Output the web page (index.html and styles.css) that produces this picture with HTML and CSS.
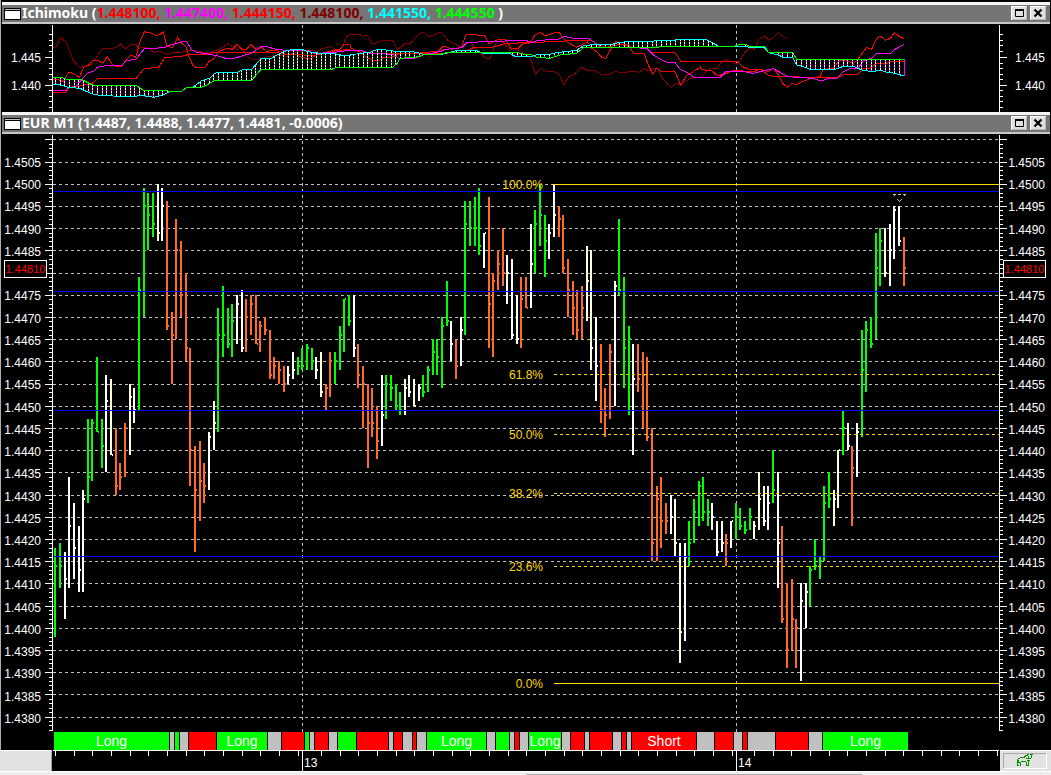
FILE: index.html
```html
<!DOCTYPE html>
<html lang="en">
<head>
<meta charset="utf-8">
<title>EUR M1</title>
<link rel="stylesheet" href="styles.css">
</head>
<body>
<main class="workspace">
  <section class="pane">
    <header class="titlebar">
      <span class="window-icon"></span>
      <h2 class="title">Ichimoku (<span class="red">1.448100,</span> <span class="magenta">1.447400,</span> <span class="red">1.444150,</span> <span class="maroon">1.448100,</span> <span class="cyan">1.441550,</span> <span class="lime">1.444550</span> )</h2>
      <button class="win-btn" type="button" aria-label="Maximize Ichimoku"><svg viewBox="0 0 16 14"><path d="M4.500 3.500h8v7h-8z" fill="none" stroke="#000"/><path d="M4 4h9" stroke="#000" stroke-width="2"/></svg></button>
      <button class="win-btn" type="button" aria-label="Close Ichimoku"><svg viewBox="0 0 16 14"><path d="M4.500 3.500l7 7M11.500 3.500l-7 7" stroke="#000" stroke-width="2.200"/></svg></button>
    </header>
    <div class="row indicator">
      <div class="axis">
        <svg class="fill" id="ind-left" viewBox="0 24 53 88" preserveAspectRatio="none"></svg>
        <ol class="labels ind-labels"><li>1.445</li><li>1.440</li></ol>
      </div>
      <div class="plot"><svg class="fill" id="ind-plot" viewBox="159 72 2838 264" preserveAspectRatio="none"></svg></div>
      <div class="axis">
        <svg class="fill" id="ind-right" viewBox="999 24 52 88" preserveAspectRatio="none"></svg>
        <ol class="labels ind-labels"><li>1.445</li><li>1.440</li></ol>
      </div>
    </div>
  </section>

  <section class="pane main-pane">
    <header class="titlebar">
      <span class="window-icon"></span>
      <h1 class="title">EUR M1 (1.4487, 1.4488, 1.4477, 1.4481, -0.0006)</h1>
      <button class="win-btn" type="button" aria-label="Maximize EUR M1"><svg viewBox="0 0 16 14"><path d="M4.500 3.500h8v7h-8z" fill="none" stroke="#000"/><path d="M4 4h9" stroke="#000" stroke-width="2"/></svg></button>
      <button class="win-btn" type="button" aria-label="Close EUR M1"><svg viewBox="0 0 16 14"><path d="M4.500 3.500l7 7M11.500 3.500l-7 7" stroke="#000" stroke-width="2.200"/></svg></button>
    </header>
    <div class="row prices">
      <div class="axis">
        <svg class="fill" id="price-left" viewBox="0 134 53 598" preserveAspectRatio="none"></svg>
        <ol class="labels price-labels"></ol>
        <output class="quote">1.44810</output>
      </div>
      <div class="plot">
        <svg class="fill" id="price-plot" viewBox="53 134 946 598" preserveAspectRatio="none"></svg>
        <div id="fib-labels"></div>
      </div>
      <div class="axis">
        <svg class="fill" id="price-right" viewBox="999 134 52 598" preserveAspectRatio="none"></svg>
        <ol class="labels price-labels"></ol>
        <output class="quote">1.44810</output>
      </div>
    </div>
    <div class="row signals"><div></div><div class="ribbon" id="ribbon"></div><div></div></div>
  </section>

  <footer class="row timeline">
    <div class="corner"></div>
    <div class="plot">
      <svg class="fill" id="time-plot" viewBox="53 750 946 21" preserveAspectRatio="none"></svg>
      <div id="time-labels"></div>
    </div>
    <div class="corner">
      <button class="bull" type="button" aria-label="Bull"><svg viewBox="0 0 18 14" shape-rendering="crispEdges"><path d="M2 4.500h2M4 3.500h5M1.500 5v7M2.500 6v2M2 8.500h2M4.500 8v4M5 7.500h5M10.500 8v4M12.500 7v5M8 2.500h2M9 1.500h3M11 .5h2M14 .5h3M15.500 1v3M10 4.500h2M13 4.500h2M12.500 2v3M11 6.500h3M2 11.500h1M11 11.500h2" fill="none" stroke="#009000"/></svg></button>
    </div>
  </footer>
  <div class="status"><span></span></div>
</main>
<script src="script.js"></script>
</body>
</html>
```

FILE: styles.css
```css
* { box-sizing: border-box; }

body {
  margin: 0;
  background: #000;
  color: #fff;
  font-family: "Liberation Sans", Arial, sans-serif;
  font-size: 12px;
  line-height: 16px;
}

.workspace {
  display: flex;
  flex-direction: column;
  min-height: 100vh;
  padding-top: 2px;
  background: linear-gradient(#b0b0b0, #b0b0b0) left top / 1px 100% no-repeat;
}

.main-pane {
  flex: 1;
  display: flex;
  flex-direction: column;
}

.titlebar {
  display: flex;
  align-items: center;
  gap: 3px;
  height: 22px;
  margin: 0 1px 0 2px;
  padding: 0 4px 2px 2px;
  background: #757575;
  border-top: 3px solid #f4f4f4;
  border-bottom: 2px solid #c8c8c8;
}

.window-icon {
  width: 17px;
  height: 12px;
  margin-top: 3px;
  background: #fff;
  border: 1px solid #000;
  box-shadow: inset 0 1px #c0c0c0, inset 0 2px #000;
}

.title {
  flex: 1;
  margin: 0 0 0 -2px;
  font: bold 14px/16px "Noto Sans", sans-serif;
  white-space: pre;
}

.red { color: #f00; }
.magenta { color: #f0f; }
.maroon { color: #800000; }
.cyan { color: #0ff; }
.lime { color: #0f0; }

.win-btn {
  width: 16px;
  height: 14px;
  padding: 0;
  border: 0;
  background: #e0e0e0;
  box-shadow: inset 1px 1px #fff, inset -1px -1px #b8b8b8;
}

.win-btn svg {
  display: block;
  width: 16px;
  height: 14px;
}

.row {
  display: grid;
  grid-template-columns: 53px minmax(0, 1fr) 52px;
}

.indicator { height: 88px; }

.prices {
  flex: 1;
  min-height: 450px;
}

.axis,
.plot {
  position: relative;
  display: flex;
}

.fill {
  position: absolute;
  inset: 0;
  width: 100%;
  height: 100%;
  shape-rendering: crispEdges;
}

.labels {
  position: relative;
  display: flex;
  flex-direction: column;
  justify-content: space-between;
  width: 46px;
  margin: 0;
  padding: 0;
  list-style: none;
  text-align: right;
}

.axis:first-child .labels { width: 41px; }
.ind-labels { padding-top: 26px; padding-bottom: 18px; }
.price-labels { padding-top: 21px; padding-bottom: 5px; }

.quote {
  position: absolute;
  top: 21%;
  left: 4px;
  width: 43px;
  height: 18px;
  border: 1px solid #fff;
  background: #000;
  color: #f00;
  font-size: 11px;
  line-height: 16px;
  text-align: center;
}

.fib {
  position: absolute;
  right: 48.2%;
  color: #ffd700;
  transform: translateY(-50%);
}

.signals { height: 18px; }

.ribbon {
  display: flex;
  gap: 1px;
  padding-left: 1px;
}

.seg {
  flex-basis: 0;
  min-width: 0;
  font-size: 14px;
  line-height: 18px;
  text-align: center;
}

.seg-g { background: #0f0; }
.seg-r { background: #f00; }
.seg-s { background: #c0c0c0; }

.timeline { height: 21px; }

.corner {
  padding: 2px 4px 1px 3px;
  background: #e2e2e2;
  border: solid #fff;
  border-width: 1px 0 0;
}

.corner:first-child { margin-right: 1px; border-right: 1px solid #a0a0a0; }
.corner:last-child { margin-left: 1px; }

.bull {
  display: block;
  width: 100%;
  height: 16px;
  padding: 0;
  border: 1px solid;
  border-color: #a8a8a8 #fff #fff #a8a8a8;
  background: #e2e2e2;
}

.bull svg {
  display: block;
  width: 18px;
  height: 14px;
  margin: 0 auto 0 12px;
}

.time {
  position: absolute;
  top: 5px;
  padding-left: 2px;
}

.status {
  height: 4px;
  padding: 3px 0 0;
  background: #eee;
  border-top: 1px solid #fff;
}

.status span {
  display: block;
  height: 1px;
  margin: -1px 18% 0 50%;
  background: #aaa;
}
```

FILE: script.js
```js
const $ = (id) => document.getElementById(id);

const line = (x1, y1, x2, y2, color, extra = "") =>
  `<path d="M${x1} ${y1}L${x2} ${y2}" fill="none" stroke="${color}" ${extra}/>`;
const rect = (x, y, w, h, color) =>
  `<rect x="${x}" y="${y}" width="${w}" height="${h}" fill="${color}"/>`;
const hdash = (x, y, end, color) => line(x, y + 0.5, end, y + 0.5, color, 'stroke-dasharray="3 3"');

/* Prices are stored as pips above 1.0000: 4481 means 1.4481 */
const priceY = (pips) => Math.floor(162 + (4505 - pips) * 4.44);

/* Axes */
function axis(x, side, majors, minors, top, bottom) {
  let out = rect(x, top, 1, bottom - top, "#fff");
  for (const y of minors) out += rect(side < 0 ? x - 3 : x + 1, y, 3, 1, "#fff");
  for (const y of majors) out += rect(side < 0 ? x - 7 : x + 1, y, 7, 1, "#fff");
  return out;
}
const indMajors = [57, 85];
const indMinors = [34, 40, 45, 51, 63, 68, 74, 79, 90, 96, 101, 107];
$("ind-left").innerHTML = axis(52, -1, indMajors, indMinors, 25, 112);
$("ind-right").innerHTML = axis(999, 1, indMajors, indMinors, 25, 112);

const majors = [], minors = [];
for (let p = 4510; p >= 4377; p--) (p % 5 ? minors : majors).push(priceY(p));
$("price-left").innerHTML = axis(52, -1, majors, minors, 135, 731);
$("price-right").innerHTML = axis(999, 1, majors, minors, 135, 731);

let labels = "";
for (let p = 4505; p >= 4380; p -= 5) labels += `<li>${(1 + p / 10000).toFixed(4)}</li>`;
document.querySelectorAll(".price-labels").forEach((el) => { el.innerHTML = labels; });

/* Price bars: colour, high, low, close */
const bars = `g4418,4398,4414 g4419,4409,4414 w4417,4402,4411 w4434,4409,4423 w4428,4411,4418 w4423,4408,4413
w4431,4408,4429 g4447,4428,4434 g4447,4433,4446 g4461,4444,4444 g4447,4436,4441 w4457,4435,4451 c4456,4439,4439
o4445,4430,4432 o4437,4431,4434 o4446,4434,4445 c4455,4439,4452 w4454,4446,4449 g4479,4449,4476 g4499,4470,4495
g4498,4485,4493 g4498,4488,4491 c4500,4487,4489 w4499,4487,4495 o4496,4467,4468 o4471,4455,4466 o4492,4465,4485
o4487,4470,4475 o4480,4460,4463 o4463,4432,4440 o4441,4417,4431 o4442,4424,4433 o4437,4428,4432 w4444,4431,4443
c4451,4440,4446 g4472,4444,4466 g4477,4461,4466 g4472,4463,4464 g4473,4461,4469 w4475,4464,4473 w4476,4462,4463
o4474,4462,4470 o4475,4466,4473 o4475,4464,4464 o4469,4462,4468 o4470,4466,4467 o4467,4456,4457 o4461,4456,4459
o4460,4455,4458 o4459,4453,4455 w4459,4455,4457 w4462,4456,4458 g4461,4457,4459 g4463,4458,4459 g4464,4458,4463
g4463,4458,4460 w4461,4456,4458 c4462,4452,4453 o4455,4449,4454 o4462,4452,4460 g4462,4455,4460 g4468,4458,4466
g4474,4462,4474 g4475,4468,4469 w4475,4461,4463 o4464,4454,4457 o4459,4445,4455 o4455,4436,4446 o4454,4443,4446
o4450,4438,4442 w4457,4441,4448 g4457,4447,4455 g4457,4451,4454 g4455,4449,4450 g4453,4448,4449 c4456,4448,4454
w4457,4452,4453 c4456,4450,4450 w4455,4451,4454 g4457,4452,4453 g4459,4453,4458 g4465,4457,4462 g4465,4457,4461
g4470,4454,4468 g4478,4468,4469 w4469,4460,4464 o4465,4456,4459 w4470,4459,4467 g4496,4466,4491 g4496,4486,4490
g4497,4486,4490 g4499,4484,4486 w4489,4481,4489 o4497,4463,4473 o4480,4461,4478 o4485,4476,4482 o4490,4477,4480
w4484,4473,4480 w4483,4465,4466 w4475,4464,4465 o4479,4463,4474 o4479,4472,4472 w4491,4472,4482 g4494,4480,4491
g4500,4486,4493 g4493,4479,4487 w4491,4483,4489 c4500,4488,4493 o4495,4488,4492 o4493,4480,4481 o4483,4470,4476
o4478,4466,4472 o4476,4465,4467 o4477,4465,4472 c4486,4469,4478 c4485,4458,4463 w4470,4451,4459 o4464,4446,4449
o4454,4443,4448 o4464,4447,4462 w4478,4450,4477 g4492,4475,4476 g4479,4454,4463 g4468,4448,4465 w4464,4439,4456
o4464,4453,4456 o4462,4445,4457 o4461,4442,4443 o4445,4415,4419 o4432,4415,4429 o4434,4418,4424 o4428,4421,4424
w4430,4421,4425 c4429,4416,4419 c4419,4392,4399 w4419,4397,4416 g4424,4414,4419 g4429,4419,4426 g4433,4423,4432
g4434,4424,4426 g4429,4423,4426 w4428,4422,4425 w4424,4416,4417 w4424,4417,4419 o4421,4414,4419 w4424,4418,4424
g4428,4420,4425 g4427,4422,4423 g4424,4421,4422 g4427,4422,4425 c4424,4420,4423 c4435,4422,4429 w4432,4423,4424
w4432,4422,4428 g4440,4428,4431 w4435,4409,4419 o4423,4401,4402 o4410,4391,4395 o4411,4395,4402 o4402,4391,4400
w4410,4388,4406 w4410,4400,4408 g4414,4405,4413 g4420,4413,4414 g4416,4411,4415 g4432,4415,4428 g4435,4427,4429
c4431,4423,4429 c4440,4427,4440 g4449,4439,4445 w4446,4440,4441 o4441,4423,4436 w4446,4434,4444 g4467,4443,4458
g4469,4453,4467 g4470,4463,4464 g4489,4465,4481 g4490,4477,4487 c4490,4479,4480 w4491,4477,4485 w4495,4483,4494
w4495,4486,4487 o4488,4477,4481`.split(/\s+/);
const barColors = { g: "#00ff00", w: "#ffffff", c: "#ffffe0", o: "#ff6a26" };

let plot = "";
for (const y of majors) plot += hdash(53, y, 999, "#c0c0c0");
for (const x of [302, 736]) plot += line(x + 0.5, 135, x + 0.5, 732, "#c0c0c0", 'stroke-dasharray="3 3"');
bars.forEach((bar, i) => {
  const color = barColors[bar[0]];
  const [high, low, close] = bar.slice(1).split(",").map(Number).map(priceY);
  const x = Math.floor(54.7 + 4.6617 * i);
  plot += rect(x, high, 2, low - high, color) + rect(x + 2, close - 1, 1, 2, color);
});
for (const y of [191, 291, 410, 556]) plot += rect(53, y, 946, 1, "#0000ff");

/* Fibonacci levels */
const fibs = [["100.0%", 184], ["61.8%", 374], ["50.0%", 434], ["38.2%", 493], ["23.6%", 566], ["0.0%", 683]];
for (const [name, y] of fibs) {
  const solid = name === "100.0%" || name === "0.0%";
  plot += solid ? rect(554, y, 445, 1, "#ffd700") : hdash(554, y, 999, "#ffd700");
  $("fib-labels").innerHTML += `<span class="fib" style="top:${((y + 1 - 134) / 598) * 100}%">${name}</span>`;
}
plot += rect(893, 194, 3, 1, "#c0c0c0") + rect(898, 194, 3, 1, "#c0c0c0") + rect(903, 194, 3, 1, "#c0c0c0")
  + rect(894, 195, 1, 1, "#c0c0c0") + rect(904, 195, 1, 1, "#c0c0c0")
  + [[897, 199], [898, 200], [899, 201], [900, 200], [901, 199]].map(([x, y]) => rect(x, y, 1, 1, "#c0c0c0")).join("");
$("price-plot").innerHTML = plot;

/* Ichimoku curves, drawn on a grid of three units to the pixel */
const parse = (text) => text.trim().split(/\s+/).map((pair) => pair.split(",").map(Number));
const join = (a, b, c) => [
  ...parse(a),
  ...parse(b).map(([x, y]) => [x + 1050, y]),
  ...parse(c).map(([x, y]) => [x + 2100, y]),
];
const chikou = join(
  "160,143 167,143 181,112 199,127 208,152 221,183 238,202 250,200 262,198 272,196 285,178 296,162 308,147 334,146 350,142 362,132 376,147 393,134 408,133 415,148 424,142 440,141 452,148 462,158 475,153 487,157 505,163 520,158 545,158 560,152 580,150 600,155 625,160 650,150 668,142 685,130 697,140 712,150 725,142 740,168 755,177 770,180 785,178 800,170 815,168 830,167 845,165 860,170 875,162 890,158 905,152 920,155 935,150 950,155 970,145 990,140 1010,150 1025,145 1040,110 1050,102",
  "28,103 38,109 53,106 67,133 80,128 97,121 127,121 142,148 155,140 165,130 180,132 193,115 210,100 223,97 236,110 250,106 268,97 278,100 292,120 310,130 335,140 350,130 362,126 375,148 390,158 405,173 418,177 430,150 440,125 455,122 465,135 480,145 500,150 520,160 540,173 547,190 556,223 572,205 588,215 615,216 628,223 642,255 656,230 670,225 695,203 712,211 735,212 757,226 780,222 795,214 815,218 850,214 866,217 882,206 895,213 920,203 935,230 950,250 965,262 978,250 990,255 1003,245 1020,237 1033,232 1050,232",
  "8,227 20,212 30,206 52,204 65,185 78,179 95,186 110,192 120,180 133,160 150,143 163,148 178,118 193,108 206,121 220,113 236,97 247,109 262,116");
const price = join(
  "160,238 172,238 190,245 198,230 208,216 225,223 238,232 252,200 265,196 278,180 293,180 308,190 322,170 336,193 350,200 365,198 377,182 393,165 407,173 420,125 433,95 452,99 470,107 480,103 490,95 500,137 518,144 533,112 545,130 558,140 567,170 578,195 588,202 615,202 628,183 640,178 655,155 680,145 697,148 712,133 725,148 740,147 752,133 767,148 785,142 800,155 820,150 845,155 860,165 880,160 905,172 918,175 932,175 950,165 975,158 1005,150 1020,148 1033,132 1050,135",
  "0,143 20,152 38,160 52,175 70,180 85,183 100,172 125,172 150,160 200,160 250,155 265,153 278,140 290,140 305,148 320,145 335,140 348,104 378,104 390,108 403,106 418,132 440,120 465,118 475,130 485,147 505,145 520,130 535,132 543,125 555,105 570,97 587,108 600,103 617,97 628,97 637,112 650,125 680,142 695,135 712,125 725,145 740,155 755,172 767,175 778,155 798,125 812,135 835,132 850,160 882,161 895,195 908,222 920,205 935,215 975,215 992,255 1010,225 1030,215 1050,202",
  "0,206 15,210 33,211 53,227 75,222 100,212 130,213 160,216 180,207 205,215 220,205 232,220 248,250 262,262 275,250 290,255 305,245 320,240 335,233 360,230 370,208 400,205 418,182 445,183 460,192 475,175 500,142 515,148 530,115 542,109 557,121 572,114 583,97 597,109 612,116");
const kijun = join(
  "160,277 197,277 208,262 240,258 262,253 275,252 292,236 408,236 433,205 475,203 495,173 545,169 567,163 620,163 640,157 830,157 850,162 900,163 930,168 980,160 1010,152 1050,148",
  "0,150 35,153 60,160 270,160 340,157 370,143 430,141 470,130 543,128 620,124 670,122 725,122 740,132 770,142 810,133 850,143 890,145 905,157 975,158 992,184 1050,184",
  "113,184 128,200 145,208 180,208 205,225 225,230 296,230 300,233 413,233 430,224 475,222 490,205 510,205 530,190 560,190 575,184 612,184");
const tenkan = join(
  "160,271 197,271 208,262 225,262 240,245 265,217 280,215 292,202 322,196 365,196 380,182 408,178 433,146 495,143 510,135 530,130 545,125 560,125 575,150 590,157 625,162 650,167 680,176 700,176 725,168 755,160 783,140 800,140 825,147 850,150 920,150 940,160 1000,158 1050,150",
  "0,150 35,152 60,160 130,163 145,174 195,174 220,165 270,155 285,148 320,145 335,143 350,128 385,126 400,124 530,122 545,128 565,121 625,118 642,109 670,115 715,115 730,125 755,143 870,144 893,147 910,165 935,180 950,187 975,187 990,207 1015,220 1033,232 1050,232",
  "60,232 78,214 125,214 160,220 200,210 220,206 240,217 262,228 280,231 340,235 362,243 385,236 410,235 430,215 450,205 475,204 490,182 515,175 530,160 572,160 585,148 612,133");
const spanA = join(
  "160,253 180,255 205,262 240,265 265,277 285,284 310,287 340,288 390,289 430,287 462,292 490,285 510,275 545,274 560,262 580,261 605,242 628,235 645,220 662,216 715,216 730,208 755,208 783,176 815,175 830,165 850,155 870,150 905,147 922,155 960,160 1000,160 1030,167 1050,167",
  "0,163 20,162 45,158 60,157 80,149 100,149 130,153 170,153 200,157 225,165 280,162 320,152 380,152 400,160 480,161 495,169 545,169 560,164 600,163 620,158 680,151 700,137 730,134 790,132 805,128 830,125 900,126 915,122 970,121 990,118 1050,118",
  "18,119 40,130 55,138 130,139 150,142 192,143 205,158 235,165 250,172 278,173 290,195 310,200 330,208 405,208 430,199 460,199 485,210 510,214 545,212 560,217 580,219 612,228");
const spanB = join(
  "160,232 185,232 200,238 245,239 280,256 408,256 430,271 495,271 510,274 545,274 560,262 605,262 620,255 645,241 755,241 783,208 995,208 1010,202 1050,202",
  "127,202 142,190 150,175 210,170 220,164 270,163 290,158 500,157 520,162 545,165 560,172 600,175 630,165 680,160 700,144 920,142 940,139 1050,139",
  "103,139 118,134 138,134 150,139 195,140 205,157 278,157 290,178 612,178");

const valueAt = (points, x) => {
  const i = Math.max(1, points.findIndex(([px]) => px >= x));
  const [[x0, y0], [x1, y1]] = [points[i - 1], points[i]];
  return y0 + ((y1 - y0) * (x - x0)) / (x1 - x0 || 1);
};
const curve = (points, color) =>
  `<polyline points="${points.map((p) => p.join()).join(" ")}" fill="none" stroke="${color}" stroke-width="3"/>`;

let ind = "";
for (const x of [907.5, 2209.5]) ind += line(x, 75, x, 336, "#c0c0c0", 'stroke-width="3" stroke-dasharray="9 9"');
ind += curve(chikou, "#800000") + curve(price, "#ff0000") + curve(kijun, "#ff0000") + curve(tenkan, "#ff00ff");
for (let i = 0; i <= 182; i++) {
  const x = Math.floor(55.5 + 4.6617 * i) * 3 + 1.5;
  if (x > 2710) break;
  const a = valueAt(spanA, x), b = valueAt(spanB, x);
  const top = Math.min(a, b), bottom = Math.max(a, b);
  if (bottom - top < 5) continue;
  ind += line(x, top, x, bottom, b < a ? "#ff00ff" : "#00a000", 'stroke-width="3"')
    + line(x, top, x, bottom, "#ffffff", 'stroke-width="3" stroke-dasharray="6 3"');
}
ind += line(2713.5, 178, 2713.5, 228, "#ff00ff", 'stroke-width="3"');
ind += curve(spanA, "#00ffff") + curve(spanB, "#00ff00");
$("ind-plot").innerHTML = ind;

/* Signal ribbon: colour, width, caption */
const segments = "g115Long s4 g4 s8 r27 g50Long s13 r22 g4 s4 r13 s8 g18 r31 s4 r8 s9 r3 s9 g59Long s8 g13 s4 r4 s8 g32Long s8 r13 s4 r22 s8 r4 s4 r64Short s17 r18 s8 r4 s27 r32 s13 g85Long x90";
$("ribbon").innerHTML = segments.split(" ").map((seg) => {
  const [, kind, width, text] = seg.match(/^(\w)(\d+)(\w*)$/);
  return `<span class="seg seg-${kind}" style="flex-grow:${width}">${text}</span>`;
}).join("");

/* Time scale */
let time = rect(53, 750, 946, 1, "#fff");
const ticks = (start, count) => {
  for (let k = 0; k < count; k++) time += rect(Math.round(start + (k * 56) / 3), 751, 1, 5, "#fff");
};
ticks(55, 14);
ticks(321, 23);
ticks(754, 14);
for (const [x, day] of [[302, "13"], [736, "14"]]) {
  time += rect(x, 751, 1, 20, "#fff");
  $("time-labels").innerHTML += `<span class="time" style="left:${((x - 53) / 946) * 100}%">${day}</span>`;
}
$("time-plot").innerHTML = time;
```
